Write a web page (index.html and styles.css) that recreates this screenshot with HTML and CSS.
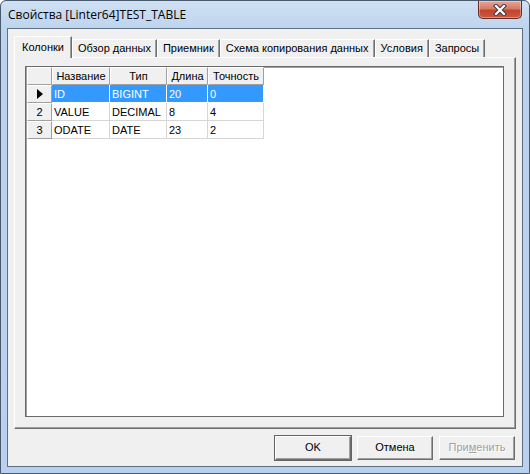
FILE: index.html
```html
<!DOCTYPE html>
<html>
<head>
<meta charset="utf-8">
<link rel="stylesheet" href="styles.css">
</head>
<body>
<div class="window">
  <div class="titlebar">
    <span class="title">Свойства [Linter64]TEST_TABLE</span>
    <div class="close">
      <svg width="18" height="12" viewBox="0 0 18 12">
        <path d="M5 2 L13 10 M13 2 L5 10" stroke="#3b3b4a" stroke-width="4.2" stroke-linecap="square"/>
        <path d="M5 2 L13 10 M13 2 L5 10" stroke="#ffffff" stroke-width="2.2" stroke-linecap="square"/>
      </svg>
    </div>
  </div>
  <div class="client">
    <div class="tabs">
      <div class="tab active">Колонки</div>
      <div class="tab">Обзор данных</div>
      <div class="tab">Приемник</div>
      <div class="tab">Схема копирования данных</div>
      <div class="tab">Условия</div>
      <div class="tab">Запросы</div>
    </div>
    <div class="panel">
      <div class="grid">
        <table>
          <colgroup>
            <col class="c0"><col class="c1"><col class="c2"><col class="c3"><col class="c4">
          </colgroup>
          <tr class="head">
            <th class="ind"></th><th>Название</th><th>Тип</th><th>Длина</th><th>Точность</th>
          </tr>
          <tr class="sel">
            <th class="ind"><span class="arrow"></span></th><td>ID</td><td>BIGINT</td><td>20</td><td>0</td>
          </tr>
          <tr>
            <th class="ind">2</th><td>VALUE</td><td>DECIMAL</td><td>8</td><td>4</td>
          </tr>
          <tr>
            <th class="ind">3</th><td>ODATE</td><td>DATE</td><td>23</td><td>2</td>
          </tr>
        </table>
      </div>
    </div>
    <div class="buttons">
      <div class="btn default">OK</div>
      <div class="btn">Отмена</div>
      <div class="btn disabled">При<u>м</u>енить</div>
    </div>
  </div>
</div>
</body>
</html>
```
FILE: styles.css
```css
html, body {
  margin: 0;
  padding: 0;
  background: #ffffff;
}
.window {
  width: 530px;
  height: 474px;
  box-sizing: border-box;
  border: 1px solid #4a5a6e;
  border-radius: 6px 6px 0 0;
  background: linear-gradient(to bottom, #cfe0f3 0px, #bcd3ee 30px, #b9d1ee 100%);
  display: flex;
  flex-direction: column;
}
.titlebar {
  height: 27px;
  display: flex;
  align-items: flex-start;
  padding-left: 7px;
  padding-right: 7px;
}
.title {
  font-family: "Open Sans", "Noto Sans", sans-serif;
  font-size: 12px;
  color: #000;
  margin-top: 6px;
  line-height: 16px;
}
.close {
  margin-left: auto;
  width: 44px;
  height: 18px;
  box-sizing: border-box;
  border: 1px solid #6b2a20;
  border-top: none;
  border-radius: 0 0 5px 5px;
  background: linear-gradient(to bottom, #e7a597 0%, #d77a66 45%, #c4432d 55%, #c75a45 100%);
  display: flex;
  align-items: center;
  justify-content: center;
  box-shadow: inset 0 0 0 1px rgba(255,255,255,0.35);
}
.close svg { display: block; }
.client {
  flex: 1;
  margin: 0 6px 6px 6px;
  border: 1px solid #5f6f82;
  background: #f0f0f0;
  display: flex;
  flex-direction: column;
  padding: 7px 6px 6px 6px;
  font-family: "Liberation Sans", "DejaVu Sans", sans-serif;
  font-size: 11px;
}
.tabs {
  display: flex;
  align-items: flex-end;
  height: 21px;
  position: relative;
  z-index: 2;
}
.tab {
  height: 18px;
  box-sizing: border-box;
  padding: 0 5px;
  line-height: 17px;
  border-left: 1px solid #ffffff;
  border-top: 1px solid #ffffff;
  border-right: 1px solid #6e6e6e;
  box-shadow: inset -1px 0 0 #a0a0a0;
  background: #f0f0f0;
  color: #000;
  white-space: nowrap;
}
.tab.active {
  padding: 1px 7px 0 7px;
  margin-bottom: -1px;
  height: 22px;
  line-height: 18px;
}
.panel {
  height: 372px;
  box-sizing: border-box;
  border-left: 1px solid #ffffff;
  border-top: 1px solid #ffffff;
  border-right: 1px solid #6e6e6e;
  border-bottom: 1px solid #6e6e6e;
  box-shadow: inset -1px -1px 0 #a0a0a0;
  padding: 8px 11px 11px 10px;
  display: flex;
}
.grid {
  flex: 1;
  background: #ffffff;
  border: 1px solid #6b6b6b;
  box-shadow: inset 1px 1px 0 #a0a0a0;
  padding: 0 0 0 1px;
}
table {
  border-collapse: separate;
  border-spacing: 0;
  table-layout: fixed;
  font-family: "Liberation Sans", "DejaVu Sans", sans-serif;
  font-size: 11px;
}
col.c0 { width: 25px; }
col.c1 { width: 58px; }
col.c2 { width: 57px; }
col.c3 { width: 41px; }
col.c4 { width: 56px; }
th, td {
  height: 17px;
  box-sizing: border-box;
  padding: 0 2px;
  white-space: nowrap;
  overflow: hidden;
  line-height: 16px;
}
th {
  background: #f0f0f0;
  font-weight: normal;
  text-align: center;
  border-left: 1px solid #ffffff;
  border-top: 1px solid #ffffff;
  border-right: 1px solid #a0a0a0;
  border-bottom: 1px solid #a0a0a0;
  color: #000;
}
td {
  border-right: 1px solid #d6d6d6;
  border-bottom: 1px solid #d6d6d6;
  text-align: left;
  padding-left: 2px;
  color: #000;
}
tr.head th { height: 17px; }
tr.sel td {
  background: #3399ff;
  color: #ffffff;
  border-right: 1px solid #ffffff;
  border-bottom: 1px solid #ffffff;
}
th.ind {
  text-align: center;
  padding: 0;
}
.arrow {
  display: inline-block;
  width: 0;
  height: 0;
  border-top: 5px solid transparent;
  border-bottom: 5px solid transparent;
  border-left: 6px solid #000;
  vertical-align: middle;
  margin-top: -2px;
}
.buttons {
  display: flex;
  justify-content: flex-end;
  gap: 6px;
  margin-top: 7px;
  padding-right: 1px;
}
.btn {
  width: 76px;
  height: 24px;
  box-sizing: border-box;
  border-left: 1px solid #ffffff;
  border-top: 1px solid #ffffff;
  border-right: 1px solid #6e6e6e;
  border-bottom: 1px solid #6e6e6e;
  box-shadow: inset -1px -1px 0 #a0a0a0;
  background: #f0f0f0;
  text-align: center;
  line-height: 21px;
  font-size: 11px;
  color: #000;
}
.btn.default {
  outline: 1px solid #646464;
}
.btn.disabled {
  color: #a0a0a0;
  text-shadow: 1px 1px 0 #ffffff;
}
```
